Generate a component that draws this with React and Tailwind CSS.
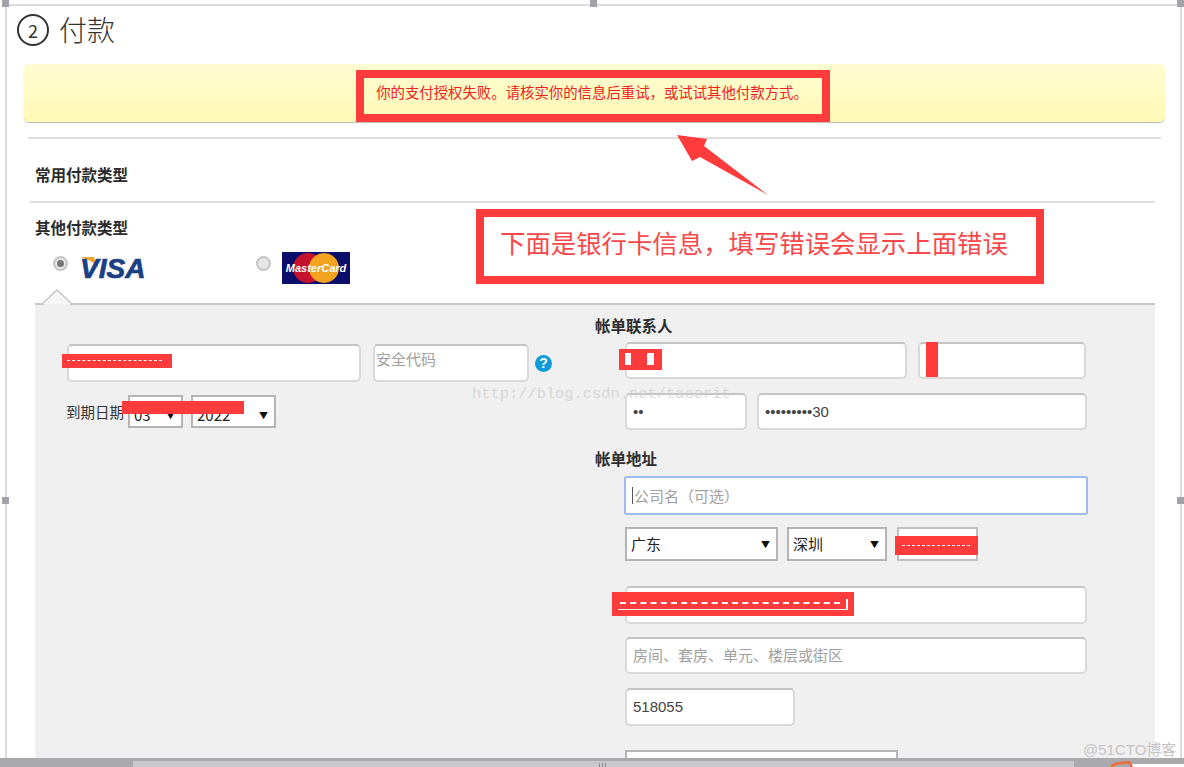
const inputCls =
  "h-full w-full rounded-[5px] border-2 border-[#d8d8d8] border-t-[#c4c4c4] bg-white text-[15px] text-[#444] font-['Liberation_Sans','Noto_Sans_CJK_SC',sans-serif] outline-none placeholder:text-[#a0a0a0]";

function Field({ className, placeholder, value, inputClass = "px-[6px]" }) {
  return (
    <div className={className}>
      <input className={inputCls + " " + inputClass} placeholder={placeholder} defaultValue={value} readOnly />
    </div>
  );
}

function Select({ className, label }) {
  return (
    <div className={"flex items-center justify-between border-2 border-[#b4b4b4] bg-white pl-1 pr-[6px] text-[15px] text-[#222] " + className}>
      <span>{label}</span>
      <span className="text-[9px] leading-none text-[#111]">▼</span>
    </div>
  );
}

function Heading({ children, className = "" }) {
  return <h3 className={"text-[15.5px] leading-5 font-bold text-[#2c2c2c] " + className}>{children}</h3>;
}

function Radio({ checked }) {
  return (
    <div className="flex h-[15px] w-[15px] items-center justify-center rounded-full border-2 border-[#c4c4c4] bg-[#e6e6e6]">
      {checked && <div className="h-[7px] w-[7px] rounded-full bg-[#777]" />}
    </div>
  );
}

function VisaLogo() {
  return (
    <div className="relative h-6 w-[66px]">
      <svg className="absolute top-0 left-0" width="22" height="14" viewBox="0 0 22 14">
        <path d="M0 1 L14 1 L19 13 C15 7 8 3 0 1 Z" fill="#f0a92e" />
      </svg>
      <span className="absolute top-[-3px] left-0 font-['Liberation_Sans',sans-serif] text-[28px] leading-8 font-bold italic text-[#1b3f83] [-webkit-text-stroke:0.7px_#1b3f83]">
        VISA
      </span>
    </div>
  );
}

function MasterCardLogo() {
  return (
    <svg width="68" height="32" viewBox="0 0 68 32">
      <rect width="68" height="32" fill="#0b0f6b" />
      <circle cx="26" cy="16" r="15" fill="#c5122d" />
      <circle cx="42" cy="16" r="15" fill="#f2a41f" />
      <text x="34" y="20" textAnchor="middle" fontFamily="Liberation Sans" fontSize="11" fontWeight="700" fontStyle="italic" fill="#fff">
        MasterCard
      </text>
    </svg>
  );
}

/* red scribbles over private data */
function Redact({ className, children }) {
  return <div className={"absolute bg-[#ff3b3b] " + className}>{children}</div>;
}

function Handle({ className }) {
  return <div className={"absolute h-[7px] w-[7px] bg-[#a2a2aa] " + className} />;
}

export default function App() {
  return (
    <div className="relative flex h-[767px] w-[1184px] flex-col overflow-hidden bg-white font-['Noto_Sans_CJK_SC',sans-serif]">
      <div className="mt-1 mr-[2px] ml-[5px] min-h-0 flex-1 overflow-hidden border-x-2 border-t-2 border-[#dcdce0] pt-2">
        {/* TITLE */}
        <div className="ml-[10px] flex items-center gap-[10px]">
          <div className="flex h-8 w-8 items-center justify-center rounded-full border-2 border-[#333] text-[18px] text-[#333]">
            2
          </div>
          <h1 className="-mt-[2px] text-[28px] leading-8 font-light text-[#333]">付款</h1>
        </div>

        {/* YELLOW NOTICE */}
        <div className="mt-[18px] mr-[15px] ml-[17px] h-[58px] rounded-[5px] bg-gradient-to-b from-[#fffdd2] to-[#fef9b6] shadow-[0_1px_1px_#b8b8b0]" />

        <div className="mt-[15px] mr-[19px] ml-[21px] h-[2px] bg-[#dedede]" />

        <Heading className="mt-[25px] ml-[28px]">常用付款类型</Heading>

        <div className="mt-[17px] mr-[25px] ml-[23px] h-[2px] bg-[#dedede]" />

        <Heading className="mt-[14px] ml-[28px]">其他付款类型</Heading>

        {/* CARD TYPES */}
        <div className="mt-[15px] ml-[46px] flex h-[36px] items-start">
          <div className="mt-1">
            <Radio checked />
          </div>
          <div className="mt-[4px] ml-[12px]">
            <VisaLogo />
          </div>
          <div className="mt-1 ml-[110px]">
            <Radio />
          </div>
          <div className="ml-[11px]">
            <MasterCardLogo />
          </div>
        </div>

        {/* FORM PANEL */}
        <div className="relative mt-[15px] mr-[25px] ml-[28px] flex h-[500px] border-t-2 border-[#c6c6c6] bg-[#f0f0f0]">
          <svg className="absolute top-[-16px] left-[6px]" width="32" height="17" viewBox="0 0 32 17">
            <path d="M1 15 L16 1 L31 15" fill="#f6f6f6" stroke="#c6c6c6" strokeWidth="1.5" />
            <rect x="3" y="15" width="26" height="2" fill="#f0f0f0" />
          </svg>

          {/* CARD */}
          <div className="w-[560px] pt-[39px] pl-[32px]">
            <div className="flex h-[38px] items-center">
              <Field className="h-full w-[294px]" />
              <Field className="ml-3 h-full w-[156px]" placeholder="安全代码" inputClass="pl-px pb-2" />
              <div className="ml-[6px] flex h-[17px] w-[17px] items-center justify-center rounded-full bg-[#0f9bd9] font-['Liberation_Sans',sans-serif] text-[14px] font-bold text-white">
                ?
              </div>
            </div>
            <div className="mt-[13px] flex h-[33px] items-center">
              <span className="-ml-px w-[62px] text-[14.5px] text-[#333]">到期日期</span>
              <Select className="h-full w-[55px] pt-[7px]" label="03" />
              <Select className="ml-2 h-full w-[85px] pt-[7px]" label="2022" />
            </div>
          </div>

          {/* BILLING */}
          <div className="flex-1 pt-[10px]">
            <Heading>帐单联系人</Heading>
            <div className="mt-[7px] ml-[30px] flex h-[37px] gap-[11px]">
              <Field className="h-full w-[282px]" />
              <Field className="h-full w-[168px]" />
            </div>
            <div className="mt-[14px] ml-[30px] flex h-[37px] gap-[10px]">
              <Field className="h-full w-[122px]" value="••" />
              <Field className="h-full w-[330px]" value="•••••••••30" />
            </div>

            <Heading className="mt-[18px]">帐单地址</Heading>
            <div className="relative mt-2 ml-[29px] h-[39px] w-[464px]">
              <input
                className="h-full w-full rounded-[3px] border-2 border-[#9dbdf0] bg-white px-2 text-[15px] outline-none placeholder:text-[#a0a0a0]"
                placeholder="公司名（可选）"
                readOnly
              />
              <div className="absolute top-[11px] left-[8px] h-[17px] w-px bg-[#555]" />
            </div>
            <div className="mt-3 ml-[30px] flex h-[34px]">
              <Select className="h-full w-[153px]" label="广东" />
              <Select className="ml-[9px] h-full w-[100px]" label="深圳" />
              <div className="ml-[10px] h-full w-[81px] border-2 border-[#c0c0c0] bg-white" />
            </div>
            <Field className="mt-[25px] ml-[30px] h-[38px] w-[462px]" />
            <Field className="mt-[13px] ml-[30px] h-[37px] w-[462px]" placeholder="房间、套房、单元、楼层或街区" />
            <Field className="mt-[14px] ml-[30px] h-[38px] w-[170px]" inputClass="px-[6px] pb-[2px]" value="518055" />
            <div className="mt-6 ml-[30px] h-[34px] w-[273px] border-2 border-[#b4b4b4] bg-white" />
          </div>
        </div>
      </div>

      {/* SCROLLBAR */}
      <div className="flex h-[9px] border-t-[3px] border-[#a9a9ae]">
        <div className="w-[133px] bg-[#a9a9ae]" />
        <div className="flex flex-1 items-end gap-[2px] bg-[#c9c9ce] pl-[466px]">
          <div className="h-1 w-[1px] bg-[#8a8a90]" />
          <div className="h-1 w-[1px] bg-[#8a8a90]" />
          <div className="h-1 w-[1px] bg-[#8a8a90]" />
        </div>
        <div className="w-[110px] bg-[#a9a9ae]">
          <svg width="110" height="6" viewBox="0 0 110 6">
            <rect x="58" y="3" width="52" height="3" fill="#ffffff" />
            <path d="M37 6 L41 3 L55 1 L58 6" fill="none" stroke="#f4693a" strokeWidth="2.5" />
          </svg>
        </div>
      </div>

      {/* RED ANNOTATIONS */}
      <div className="absolute top-[70px] left-[356px] flex h-[52px] w-[474px] items-center justify-center border-[8px] border-[#ff3b3b] pr-[2px] pb-2 text-[14.4px] whitespace-nowrap text-[#f02222]">
        你的支付授权失败。请核实你的信息后重试，或试试其他付款方式。
      </div>
      <div className="absolute top-[209px] left-[476px] flex h-[75px] w-[568px] items-center border-[8px] border-[#ff3b3b] pb-2 pl-4 text-[25.4px] whitespace-nowrap text-[#f8484a]">
        下面是银行卡信息，填写错误会显示上面错误
      </div>
      <svg className="absolute top-[130px] left-[670px]" width="105" height="70" viewBox="0 0 105 70">
        <path d="M7 5 L37 9 L34 16 L98 65 L30 27 L22 31 Z" fill="#ff3b3b" />
      </svg>

      {/* REDACTIONS */}
      <Redact className="top-[354px] left-[62px] h-[14px] w-[110px]">
        <div className="mt-[6px] ml-[5px] w-[95px] border-t border-dashed border-white" />
      </Redact>
      <Redact className="top-[401px] left-[122px] h-[13px] w-[122px]" />
      <Redact className="top-[349px] left-[619px] h-[21px] w-[43px]">
        <div className="mt-1 ml-[6px] flex gap-[16px]">
          <div className="h-3 w-[6px] bg-white" />
          <div className="h-3 w-[7px] bg-white" />
        </div>
      </Redact>
      <Redact className="top-[342px] left-[926px] h-[35px] w-3" />
      <Redact className="top-[536px] left-[895px] h-[19px] w-[83px]">
        <div className="mt-[9px] ml-[7px] w-[68px] border-t border-dashed border-white" />
      </Redact>
      <Redact className="top-[592px] left-[612px] h-[24px] w-[242px]">
        <div className="mt-[10px] ml-2 w-[220px] border-t-2 border-dashed border-white" />
        <div className="relative mt-[5px] ml-[6px] w-[230px] border-t border-white">
          <div className="absolute right-0 bottom-0 h-[11px] w-[2px] bg-white" />
        </div>
      </Redact>

      {/* WATERMARKS */}
      <div className="absolute top-[385px] left-[472px] font-['Liberation_Mono',monospace] text-[15.4px] leading-[18px] whitespace-nowrap text-[#cfcfcf]/80">
        http://blog.csdn.net/taoerit
      </div>
      <div className="absolute top-[740px] left-[1083px] font-['Liberation_Sans','Noto_Sans_CJK_SC',sans-serif] text-[15px] leading-5 whitespace-nowrap text-[#c4c4c4]">
        @51CTO博客
      </div>

      {/* SELECTION HANDLES */}
      <Handle className="top-0 left-[2px]" />
      <Handle className="top-0 left-[590px]" />
      <Handle className="top-0 left-[1177px]" />
      <Handle className="top-[497px] left-[2px]" />
      <Handle className="top-[497px] left-[1177px]" />
    </div>
  );
}
